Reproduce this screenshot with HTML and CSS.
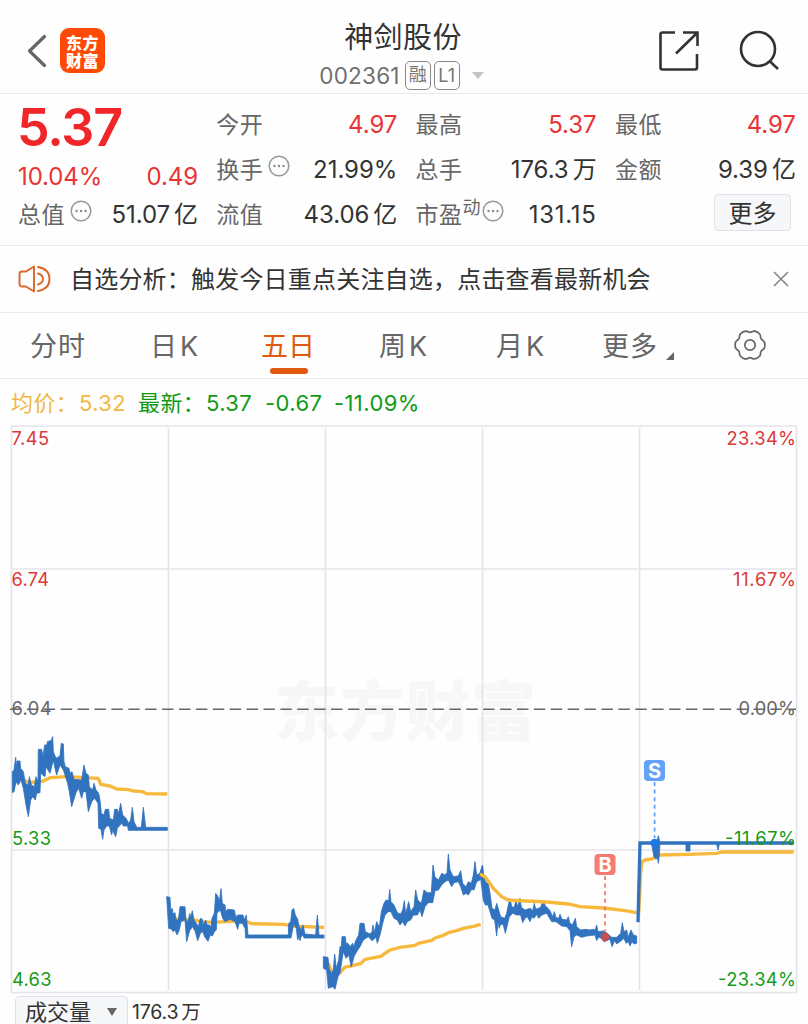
FILE: index.html
```html
<!DOCTYPE html>
<html lang="zh-CN">
<head>
<meta charset="utf-8">
<title>神剑股份 002361</title>
<link rel="stylesheet" href="styles.css">
</head>
<body>
<main class="app">
  <header class="header">
    <div class="header-left">
      <svg class="back" width="22" height="36" viewBox="0 0 22 36"><path d="M18.5 3.5 3.5 18 18.5 32.5"/></svg>
      <div class="logo"><span>东方<br>财富</span></div>
    </div>
    <div class="title">
      <h1>神剑股份</h1>
      <div class="code-row"><span class="code">002361</span><span class="tag tag-cjk">融</span><span class="tag">L1</span><i class="caret"></i></div>
    </div>
    <div class="header-right">
      <svg width="42" height="42" viewBox="0 0 42 42"><path d="M17 2.500H4.500Q2.500 2.500 2.500 4.500V37.500Q2.500 39.500 4.500 39.500H37Q39 39.500 39 37.500V24M25 2.500H39.500V16M39 3 18 23.500"/></svg>
      <svg width="42" height="42" viewBox="0 0 42 42"><circle cx="20" cy="19" r="17"/><path d="M31.500 31 40 39"/></svg>
    </div>
  </header>

  <section class="quote">
    <div class="price-block">
      <div class="price">5.37</div>
      <div class="change"><span>10.04%</span><span>0.49</span></div>
    </div>
    <div class="cell"><span class="label">今开</span><b class="up">4.97</b></div>
    <div class="cell"><span class="label">最高</span><b class="up">5.37</b></div>
    <div class="cell"><span class="label">最低</span><b class="up">4.97</b></div>
    <div class="cell"><span class="label">换手<svg class="info" width="22" height="22"><use href="#info"/></svg></span><b>21.99%</b></div>
    <div class="cell"><span class="label">总手</span><b>176.3<em>万</em></b></div>
    <div class="cell"><span class="label">金额</span><b>9.39<em>亿</em></b></div>
    <div class="cell"><span class="label">总值<svg class="info" width="22" height="22"><use href="#info"/></svg></span><b>51.07<em>亿</em></b></div>
    <div class="cell"><span class="label">流值</span><b>43.06<em>亿</em></b></div>
    <div class="cell"><span class="label">市盈<small>动</small><svg class="info tight" width="22" height="22"><use href="#info"/></svg></span><b class="wide">131.15</b></div>
    <div class="cell end"><button class="more">更多</button></div>
  </section>

  <section class="notice">
    <svg class="speaker" width="34" height="28" viewBox="0 0 34 28"><path d="M16 1.500V26.500L8 21.500H4Q1.500 21.500 1.500 19V9Q1.500 6.500 4 6.500H8ZM20 8.500Q25 10 25 14T20 19.500M20 2Q31.500 4 31.500 14T20 26"/></svg>
    <span class="notice-text">自选分析：触发今日重点关注自选，点击查看最新机会</span>
    <svg class="close" width="16" height="16" viewBox="0 0 16 16"><path d="M1 1 15 15M15 1 1 15"/></svg>
  </section>

  <nav class="tabs">
    <span>分时</span><span>日<i>K</i></span><span class="active">五日</span><span>周<i>K</i></span><span>月<i>K</i></span><span>更多<i class="corner"></i></span>
    <svg class="gear" width="32" height="32" viewBox="-16 -16 32 32">
      <defs><path id="tooth" d="M14.400-2.900Q15.400 0 14.400 2.900C13.900 4.600 11.900 4.800 11 6.350C10.100 7.900 10.950 9.800 9.700 11"/></defs>
      <use href="#tooth"/><use href="#tooth" transform="rotate(60)"/><use href="#tooth" transform="rotate(120)"/><use href="#tooth" transform="rotate(180)"/><use href="#tooth" transform="rotate(240)"/><use href="#tooth" transform="rotate(300)"/>
      <circle r="5.200"/>
    </svg>
  </nav>

  <section class="legend">
    <span class="avg">均价：</span><span class="avg">5.32</span><span>最新：</span><span>5.37</span><span>-0.67</span><span>-11.09%</span>
  </section>

  <svg class="chart" width="808" height="569" viewBox="0 425 808 569">
    <text class="watermark" x="274" y="735" textLength="262">东方财富</text>
    <g class="grid">
      <path d="M11.500 426H796.500V992.500H11.500ZM11.500 569H796.500M11.500 850H796.500"/>
      <path d="M168.500 428V990M325.500 428V990M482.500 428V990M639.500 428V990"/>
    </g>
    <path class="zero" d="M10 709.300H796"/>

    <g transform="translate(0 720) scale(.33333)">
      <path class="average" d="M70 180 88 188 130 183 150 173 200 170 295 175 302 193 330 198 350 207 385 209 400 213 428 215 440 221 502 222"/>
      <path class="trend" d="M37 155 42 150 47 112 50 145 51 123 60 123 62 145 70 155 76 190 85 195 88 170 94 195 103 200 108 170 114 185 115 88 125 88 129 110 134 75 141 75 142 65 153 62 158 50 160 95 168 115 180 108 184 70 190 72 192 125 196 140 207 145 210 160 216 155 222 178 245 180 252 135 258 160 265 165 268 200 278 210 282 190 288 210 296 220 300 240 304 280 312 285 316 268 326 268 329 295 340 300 344 268 352 268 356 280 362 250 368 285 378 295 386 310 392 300 397 262 402 305 410 322 424 322 430 262 437 322 502 322V331H385L383 318 370 318 365 310 352 325 347 350 338 330 335 345 328 318 320 318 312 330 308 358 303 328 296 325 294 250 284 235 275 245 265 275 258 215 250 215 245 235 236 205 228 218 215 260 208 215 203 190 195 165 190 150 180 135 170 165 165 145 160 120 150 160 138 140 135 170 122 160 120 218 110 220 106 240 98 230 92 240 85 290 78 255 70 205 63 180 55 195 48 185 42 215 37 218Z"/>
    </g>
    <g transform="translate(155 860) scale(.33333)">
      <path class="average" d="M45 170 66 177 120 180 135 185 170 187 270 182 290 191 390 193 405 198 507 202"/>
      <path class="trend" d="M35 110 45 112 47 150 52 145 54 162 60 158 63 180 70 180 75 140 90 140 93 180 100 185 104 160 107 172 112 152 117 180 124 190 130 200 136 175 142 178 144 195 152 180 156 195 163 195 168 200 171 175 178 160 182 100 188 108 193 125 198 86 202 130 210 135 212 155 218 148 238 150 242 170 250 165 264 165 268 180 274 165 279 225 400 225 401 190 407 185 411 150 416 145 421 165 428 178 432 198 438 210 444 195 450 222 482 225 487 165 492 225 507 225V234H447L445 225 438 230 435 242 431 228 428 240 424 205 416 192 408 234 272 234 270 205 262 190 252 190 248 208 240 185 225 178 210 185 203 175 196 150 186 160 184 210 178 215 172 228 166 225 159 244 150 232 143 215 137 218 128 242 121 215 113 200 104 212 95 245 90 180 78 185 73 210 66 225 60 210 54 215 49 207 41 205Z"/>
    </g>
    <g transform="translate(310 840) scale(.33333)">
      <path class="average" d="M55 370 65 395 90 398 104 382 152 371 165 358 212 349 240 330 270 322 315 316 325 310 365 301 375 294 400 286 415 278 440 272 460 265 490 259 512 253"/>
      <path class="trend" d="M40 350 54 352 57 385 64 400 70 390 74 342 79 385 86 360 90 320 94 320 96 290 106 290 108 310 114 310 120 320 128 310 131 320 138 300 146 285 150 250 162 250 166 275 180 282 186 275 189 255 193 278 200 245 208 262 214 215 222 190 228 180 236 182 239 148 243 185 252 195 262 218 272 222 278 210 283 182 287 222 296 185 302 215 312 200 317 150 323 180 334 190 342 150 352 158 364 158 369 75 375 112 386 120 395 100 405 105 411 98 415 42 420 90 430 110 445 108 452 92 458 130 468 140 475 125 484 130 490 105 495 65 500 105 510 100 518 78V110L510 120 500 125 492 150 485 148 475 165 468 160 460 165 452 140 445 125 432 128 425 140 415 120 405 125 395 135 385 150 375 152 368 188 355 188 345 200 336 230 330 210 322 225 310 225 302 240 292 245 285 258 278 245 270 255 262 240 252 235 243 215 235 215 225 225 218 250 210 285 202 310 198 292 186 302 175 290 160 300 150 320 140 335 132 350 124 380 116 345 108 355 100 335 96 360 90 400 84 410 75 448 68 440 55 445 50 390 40 385Z"/>
    </g>
    <g transform="translate(470 850) scale(.33333)">
      <path class="trend" d="M30 70 37 45 42 80 48 100 54 95 60 130 66 175 75 180 80 160 86 180 92 200 104 205 110 190 115 165 120 145 125 170 133 172 138 150 143 170 150 145 154 172 165 180 180 175 188 182 193 160 197 178 212 172 220 150 226 168 234 175 240 182 248 200 253 185 258 203 266 205 270 193 276 208 290 210 295 200 299 218 307 225 316 205 320 230 332 240 345 238 360 240 370 238 376 240 380 225 384 245 400 243 412 250 425 262 440 262 452 250 457 218 462 245 470 240 474 262 483 240 490 255 500 258V280L492 282 486 275 480 288 475 275 468 280 462 265 450 275 440 282 434 272 426 290 420 268 402 275 395 265 385 262 380 272 375 255 350 258 335 262 320 255 312 260 305 290 300 242 290 230 275 228 258 215 245 215 230 190 215 195 206 205 200 193 192 205 186 200 180 215 172 200 165 205 158 218 152 195 140 195 128 190 118 200 112 225 106 250 100 225 92 222 88 235 84 215 80 258 74 210 66 205 60 185 54 165 46 165 40 150 35 110Z"/>
      <path class="average" d="M30 72 45 80 70 115 95 140 115 150 170 153 230 156 295 162 330 170 400 174 460 181 500 188"/>
    </g>
    <g transform="translate(580 740) scale(.33333)">
      <path class="average" d="M176 520 182 400 186 365 195 360 215 357 240 345 325 343 410 340 425 336 641 336"/>
      <path class="trend-line" d="M174 547 180 309H641"/>
      <path class="trend" d="M216 309 217 325 222 350 228 358 232 350 235 370 238 345 240 309 235 287 230 309ZM318 309H330V333H318ZM409 309 414 330 419 309Z"/>
    </g>

    <g class="sell">
      <path d="M654.600 782V838"/>
      <rect x="644" y="760" width="21" height="21" rx="4"/>
      <circle cx="654.600" cy="843" r="4.200"/>
      <text x="654.500" y="778">S</text>
    </g>
    <g class="buy">
      <path d="M605 876V932"/>
      <rect x="594.500" y="854" width="21" height="21" rx="4"/>
      <circle cx="605" cy="937" r="4.200"/>
      <text x="605" y="871.500">B</text>
    </g>

    <g class="axis">
      <text class="up" x="11.500" y="444.500" textLength="37.500">7.45</text>
      <text class="up" x="11.500" y="585.500" textLength="37.500">6.74</text>
      <text x="11.500" y="715" textLength="40">6.04</text>
      <text class="down" x="12" y="844.500" textLength="39">5.33</text>
      <text class="down" x="12" y="985.500" textLength="39.500">4.63</text>
      <text class="up" x="726.500" y="444.500" textLength="69.500">23.34%</text>
      <text class="up" x="733" y="585.500" textLength="63">11.67%</text>
      <text x="738.500" y="715" textLength="57.500">0.00%</text>
      <text class="down" x="725" y="844.500" textLength="71">-11.67%</text>
      <text class="down" x="718" y="985.500" textLength="78">-23.34%</text>
    </g>
  </svg>

  <footer class="volume">
    <div class="select">成交量<i></i></div>
    <span class="volume-value">176.3<em>万</em></span>
  </footer>
</main>
<svg class="symbols" width="0" height="0"><symbol id="info" viewBox="0 0 22 22"><circle class="ring" cx="11" cy="11" r="9.800"/><circle cx="6.500" cy="11" r="1.200"/><circle cx="11" cy="11" r="1.200"/><circle cx="15.500" cy="11" r="1.200"/></symbol></svg>
</body>
</html>
```
FILE: styles.css
```css
* { box-sizing: border-box; }
body { margin: 0; background: #fefefe; color: #333; font-family: Inter, "Noto Sans CJK SC", sans-serif; overflow: hidden; }
b, i, em { font-weight: 400; font-style: normal; }
svg { display: block; flex: none; }
.app { width: 808px; height: 1024px; overflow: hidden; }

.header { height: 94px; padding: 8px 28px 0 26px; display: grid; grid-template-columns: 1fr auto 1fr; border-bottom: 1.500px solid #e9e9ec; }
.header-left { display: flex; align-items: center; gap: 12px; height: 87px; margin-top: -1px; }
.back path { fill: none; stroke: #666; stroke-width: 3.2; stroke-linecap: round; stroke-linejoin: round; }
.logo { width: 45px; height: 45px; border-radius: 9px; background: #ff4a06; color: #fff; font: 900 16px/18px "Noto Sans CJK SC", sans-serif; letter-spacing: .5px; display: flex; align-items: center; justify-content: center; }
.title { display: flex; flex-direction: column; align-items: center; padding-top: 12px; }
.title h1 { margin: 0; font-size: 29px; line-height: 36px; font-weight: 400; letter-spacing: .4px; }
.code-row { display: flex; align-items: center; height: 30px; margin: 4px 3px 0 0; }
.code { font-size: 22.5px; color: #707070; letter-spacing: .2px; margin-right: 5px; }
.tag { width: 26px; height: 29px; margin-right: 3px; border: 1.500px solid #888; border-radius: 5px; font-size: 18px; line-height: 27px; text-align: center; color: #777; }
.tag-cjk { line-height: 24px; padding-top: 1px; }
.caret { margin-left: 9px; border: 6.500px solid transparent; border-top: 7px solid #c4c4c4; border-bottom: 0; }
.header-right { display: flex; justify-content: flex-end; gap: 38px; padding-top: 22px; }
.header-right svg { fill: none; stroke: #333; stroke-width: 2.600; }

.quote { height: 152px; padding: 8px 12px 0 18px; display: grid; grid-template-columns: 180px 181px 181px 181px; column-gap: 18.300px; grid-template-rows: 45px 45px 45px; border-bottom: 1.500px solid #e9e9ec; }
.price-block { grid-row: span 2; color: #e93436; }
.price { font-size: 52px; line-height: 52px; font-weight: 600; color: #f02629; height: 60px; letter-spacing: -1.200px; margin-left: -1px; }
.change { display: flex; justify-content: space-between; font-size: 24px; line-height: 30px; letter-spacing: -.1px; }
.cell { display: flex; justify-content: space-between; align-items: center; font-size: 24px; height: 45px; letter-spacing: -.05px; white-space: nowrap; }
.cell b { line-height: 30px; }
.cell b em { margin-left: 4px; line-height: 1; }
.cell .wide { letter-spacing: .7px; }
.label { display: flex; align-items: center; color: #666; font-size: 23px; letter-spacing: .5px; line-height: 34px; margin-top: 1px; }
.label small { font-size: 18px; margin: -15px 1px 0 0; letter-spacing: 0; }
.info { margin: -9px 0 0 5px; fill: #888; }
.info.tight { margin-left: 0; }
.ring { fill: none; stroke: #999; stroke-width: 1.500; }
b.up { color: #e93436; }
.cell.end { justify-content: flex-end; }
.more { width: 77px; height: 37px; margin: -4px 5px 0 0; padding: 0 0 3px; border: 1.500px solid #e0e1e6; border-radius: 4px; background: #f6f7f9; color: #333; font: 24px/31px "Noto Sans CJK SC", sans-serif; }

.notice { height: 67px; padding: 0 19px 0 18px; display: flex; align-items: center; border-bottom: 1.500px solid #e9e9ec; }
.speaker { fill: none; stroke: #d9662a; stroke-width: 1.900; stroke-linejoin: round; stroke-linecap: round; margin-right: 18px; }
.notice-text { flex: 1; font-size: 24px; letter-spacing: .2px; white-space: nowrap; margin-top: -3px; }
.close { stroke: #888; stroke-width: 1.700; }

.tabs { height: 66px; padding-left: 30px; display: grid; grid-template-columns: 120px 112px 117px 117px 106px 131px auto; border-bottom: 1.500px solid #e9e9ec; font-size: 27px; line-height: 67px; letter-spacing: 1px; color: #666; }
.tabs span { position: relative; height: 64px; white-space: nowrap; justify-self: start; }
.tabs i { margin-left: 2px; }
.tabs .active { color: #e0590f; letter-spacing: 0; margin-left: -1px; }
.active::after { content: ""; position: absolute; left: 9px; bottom: 3px; width: 38px; height: 6px; border-radius: 3px; background: #e0590f; }
.tabs .corner { display: inline-block; margin-left: 8px; border-left: 8px solid transparent; border-bottom: 8px solid #666; vertical-align: -4px; }
.gear { align-self: center; margin: -1px 0 0 1px; fill: none; stroke: #666; stroke-width: 1.700; stroke-linecap: round; }

.legend { height: 46px; padding-left: 11px; display: grid; grid-template-columns: 68px 59px 68px 59px 69px auto; align-items: center; font-size: 22px; line-height: 48px; letter-spacing: .4px; color: #0f9a14; white-space: nowrap; }
.legend .avg { color: #f2b844; }

.chart { font-family: Inter, sans-serif; }
.watermark { font: 900 65px "Noto Sans CJK SC", sans-serif; fill: #f7f7f8; }
.grid path { fill: none; stroke: #e3e3ea; stroke-width: 1.600; }
.zero { stroke: #666; stroke-width: 1.500; stroke-dasharray: 11.400 5.500; }
.trend { fill: #3173bf; stroke: #3173bf; stroke-width: 2.500; }
.trend-line { fill: none; stroke: #3173bf; stroke-width: 10; }
.average { fill: none; stroke: #f7b93c; stroke-width: 10; stroke-linejoin: round; }
.axis { font-size: 18.300px; fill: #666; }
.axis .up { fill: #d93a3a; }
.axis .down { fill: #149b17; }
.buy text, .sell text { fill: #fff; font-size: 20px; font-weight: 700; text-anchor: middle; }
.buy path, .sell path { stroke-width: 1.700; stroke-dasharray: 4 3.600; }
.sell path { stroke: #5a9ff5; }
.sell rect { fill: #64a2f7; }
.sell circle { fill: #1c79e8; }
.buy path { stroke: #ed7771; }
.buy rect { fill: #f67b70; }
.buy circle { fill: #c94c51; }

.volume { display: flex; padding: 2px 0 0 15px; font-size: 19.500px; line-height: 32px; }
.select { width: 113px; height: 36px; padding: 0 0 5px 9px; display: flex; align-items: center; border: 1.500px solid #e0e1e6; border-radius: 4px; background: #f6f7f9; font-size: 22px; line-height: 28px; }
.select i { margin-left: 16px; border: 5px solid transparent; border-top: 8px solid #666; border-bottom: 0; }
.volume-value { margin-left: 4px; letter-spacing: -.2px; }
.volume-value em { margin-left: 3px; line-height: 1; }
.symbols { position: absolute; }
```
